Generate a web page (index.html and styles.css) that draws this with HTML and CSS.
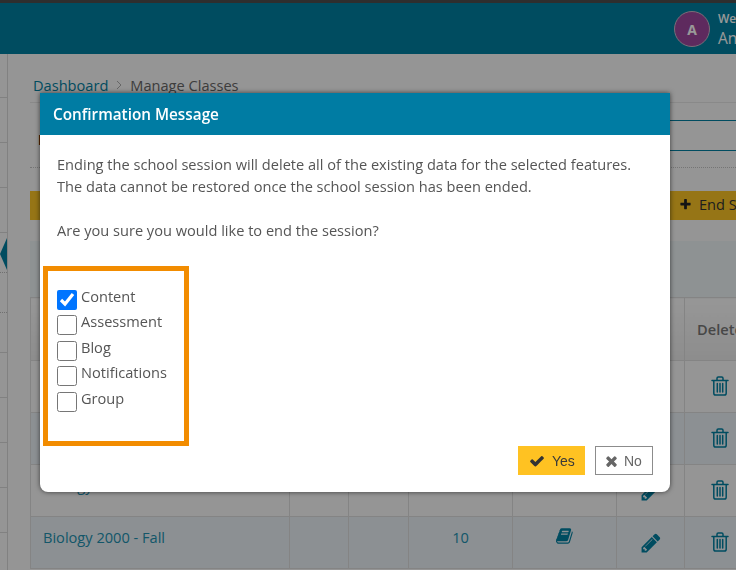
FILE: index.html
```html
<!DOCTYPE html>
<html lang="en">
<head>
<meta charset="utf-8">
<title>Manage Classes</title>
<link rel="stylesheet" href="styles.css">
</head>
<body>
<svg class="defs" aria-hidden="true">
  <symbol id="i-check" viewBox="0 0 1792 1792"><path d="M1671 566q0 40-28 68l-724 724-136 136q-28 28-68 28t-68-28l-136-136-362-362q-28-28-28-68t28-68l136-136q28-28 68-28t68 28l294 295 656-657q28-28 68-28t68 28l136 136q28 28 28 68z"/></symbol>
  <symbol id="i-times" viewBox="0 0 1408 1792"><path d="M1298 1322q0 40-28 68l-136 136q-28 28-68 28t-68-28l-294-294-294 294q-28 28-68 28t-68-28l-136-136q-28-28-28-68t28-68l294-294-294-294q-28-28-28-68t28-68l136-136q28-28 68-28t68 28l294 294 294-294q28-28 68-28t68 28l136 136q28 28 28 68t-28 68l-294 294 294 294q28 28 28 68z"/></symbol>
  <symbol id="i-plus" viewBox="0 0 1792 1792"><path d="M1600 736v192q0 40-28 68t-68 28h-416v416q0 40-28 68t-68 28h-192q-40 0-68-28t-28-68v-416h-416q-40 0-68-28t-28-68v-192q0-40 28-68t68-28h416v-416q0-40 28-68t68-28h192q40 0 68 28t28 68v416h416q40 0 68 28t28 68z"/></symbol>
  <symbol id="i-pencil" viewBox="0 0 1792 1792"><path d="M491 1536l91-91-235-235-91 91v107h128v128h107zm523-928q0-22-22-22-10 0-17 7l-542 542q-7 7-7 17 0 22 22 22 10 0 17-7l542-542q7-7 7-17zm-54-192l416 416-832 832h-416v-416zm683 96q0 53-37 90l-166 166-416-416 166-165q36-38 90-38 53 0 91 38l235 234q37 39 37 91z"/></symbol>
  <symbol id="i-book" viewBox="0 0 1792 1792"><path d="M1639 478q40 57 18 129l-275 906q-19 64-76.500 107.500t-122.500 43.500h-923q-77 0-148.500-53.500t-99.500-131.500q-24-67-2-127 0-4 3-27t4-37q1-8-3-21.500t-3-19.500q2-11 8-21t16.500-23.500 16.500-23.500q23-38 45-91.500t30-91.500q3-10 .5-30t-.5-28q3-11 17-28t17-23q21-36 42-92t25-90q1-9-2.500-32t.5-28q4-13 22-30.500t22-22.500q19-26 42.500-84.500t27.500-96.500q1-8-3-25.500t-2-26.500q2-8 9-18t18-23 17-21q8-12 16.500-30.500t15-35 16-36 19.500-32 26.500-23.500 36-11.500 47.500 5.500l-1 3q38-9 51-9h761q74 0 114 56t18 130l-274 906q-36 119-71.500 153.500t-128.500 34.500h-869q-27 0-38 15-11 16-1 43 24 70 144 70h923q29 0 56-15.500t35-41.500l300-987q7-22 5-57 38 15 59 43zm-1064 2q-4 13 2 22.500t20 9.500h608q13 0 25.500-9.500t16.500-22.500l21-64q4-13-2-22.500t-20-9.500h-608q-13 0-25.500 9.500t-16.500 22.500zm-83 256q-4 13 2 22.500t20 9.500h608q13 0 25.500-9.500t16.500-22.500l21-64q4-13-2-22.500t-20-9.500h-608q-13 0-25.500 9.500t-16.500 22.500z"/></symbol>
  <symbol id="i-trash" viewBox="0 0 18 20"><path class="trash-line" d="M1 4.500h16M6 4.500V2.300Q6 1 7.300 1h3.400Q12 1 12 2.300v2.200M2.800 4.500v12.700Q2.800 19 4.600 19h8.800q1.800 0 1.800-1.800V4.500M6.300 7.500v8.500M9 7.500v8.500M11.700 7.500v8.500"/></symbol>
</svg>

<header class="topbar">
  <div class="avatar">A</div>
  <div class="user">
    <div class="user-hello">Welcome</div>
    <div class="user-name">Andrew</div>
  </div>
</header>

<div class="page">
  <nav class="sidebar">
    <div class="nav-item nav-first"></div>
    <div class="nav-item"></div>
    <div class="nav-item"></div>
    <div class="nav-item"></div>
    <div class="nav-item nav-short"></div>
    <div class="nav-item nav-short"></div>
    <div class="nav-item nav-tall"></div>
    <div class="nav-item"></div>
    <div class="nav-item"></div>
    <div class="nav-item"></div>
    <div class="nav-item"></div>
    <span class="nav-toggle"></span>
  </nav>

  <main class="main">
    <div class="crumbs">
      <a class="crumb-link">Dashboard</a>
      <svg class="crumb-sep" viewBox="0 0 6 10"><path d="M1 1l4 4-4 4"/></svg>
      <span class="crumb-current">Manage Classes</span>
    </div>
    <div class="toolbar">
      <h1 class="page-title">Manage Classes</h1>
      <div class="search-field"></div>
    </div>
    <div class="dotted"></div>
    <div class="action-bar">
      <svg class="icon-plus"><use href="#i-plus"/></svg>
      <span>End Session</span>
    </div>
    <div class="band"></div>
    <table class="classes">
      <colgroup>
        <col class="c-name"><col class="c-a"><col class="c-b"><col class="c-c"><col class="c-d"><col class="c-e"><col class="c-f">
      </colgroup>
      <thead>
        <tr><th class="th-name">Class</th><th></th><th></th><th>Students</th><th>Content</th><th>Edit</th><th>Delete</th></tr>
      </thead>
      <tbody>
        <tr><td class="name">Algebra 1000 - Fall</td><td></td><td></td><td>12</td><td><svg class="icon-book"><use href="#i-book"/></svg></td><td><svg class="icon-pencil"><use href="#i-pencil"/></svg></td><td><svg class="icon-trash"><use href="#i-trash"/></svg></td></tr>
        <tr class="tint"><td class="name">Algebra 1000 - Spring</td><td></td><td></td><td>14</td><td><svg class="icon-book"><use href="#i-book"/></svg></td><td><svg class="icon-pencil"><use href="#i-pencil"/></svg></td><td><svg class="icon-trash"><use href="#i-trash"/></svg></td></tr>
        <tr><td class="name">Biology 1000 - Fall</td><td></td><td></td><td>11</td><td><svg class="icon-book"><use href="#i-book"/></svg></td><td><svg class="icon-pencil"><use href="#i-pencil"/></svg></td><td><svg class="icon-trash"><use href="#i-trash"/></svg></td></tr>
        <tr class="tint"><td class="name">Biology 2000 - Fall</td><td></td><td></td><td>10</td><td><svg class="icon-book"><use href="#i-book"/></svg></td><td><svg class="icon-pencil"><use href="#i-pencil"/></svg></td><td><svg class="icon-trash"><use href="#i-trash"/></svg></td></tr>
      </tbody>
    </table>
  </main>
</div>

<div class="overlay"></div>

<section class="modal" role="dialog" aria-labelledby="modal-title">
  <h2 class="modal-head" id="modal-title">Confirmation Message</h2>
  <div class="modal-body">
    <p class="msg">Ending the school session will delete all of the existing data for the selected features.<br>The data cannot be restored once the school session has been ended.</p>
    <p class="msg msg-ask">Are you sure you would like to end the session?</p>
    <div class="feature-box">
      <label class="feature"><input type="checkbox" checked><span>Content</span></label>
      <label class="feature"><input type="checkbox"><span>Assessment</span></label>
      <label class="feature"><input type="checkbox"><span>Blog</span></label>
      <label class="feature"><input type="checkbox"><span>Notifications</span></label>
      <label class="feature"><input type="checkbox"><span>Group</span></label>
    </div>
  </div>
  <div class="modal-foot">
    <button class="btn btn-yes" type="button"><svg class="btn-icon"><use href="#i-check"/></svg>Yes</button>
    <button class="btn btn-no" type="button"><svg class="btn-icon btn-icon-x"><use href="#i-times"/></svg>No</button>
  </div>
</section>
</body>
</html>
```

FILE: styles.css
```css
* { box-sizing: border-box; }

html, body {
  margin: 0;
  height: 570px;
  overflow: hidden;
}

body {
  background: #f8f8f8;
  font-family: "Open Sans", "Liberation Sans", sans-serif;
  font-size: 14.600px;
  color: #555;
}

.defs { display: none; }

/* top bar */
.topbar {
  display: flex;
  align-items: center;
  gap: 8px;
  height: 54px;
  padding-left: 674px;
  background: #017fa1;
  border-top: 3px solid #4e4e4e;
  overflow: hidden;
}

.avatar {
  flex: none;
  display: flex;
  align-items: center;
  justify-content: center;
  width: 36px;
  height: 36px;
  margin-top: 1px;
  border: 1px solid #c9b6c9;
  border-radius: 50%;
  background: #9d469d;
  color: #fff;
  font-weight: 700;
  font-size: 14px;
}

.user { color: #fff; white-space: nowrap; padding-top: 2px; }
.user-hello { font-size: 12px; font-weight: 600; line-height: 14px; }
.user-name { font-size: 15.500px; line-height: 20px; margin-top: 2px; }

/* page frame */
.page { display: flex; }

.sidebar {
  position: relative;
  flex: none;
  width: 8px;
  height: 516px;
  border-right: 1px solid #d8d8d8;
}

.nav-item { height: 45px; border-bottom: 1px solid #d8d8d8; }
.nav-first { height: 44px; }
.nav-short { height: 40px; border-bottom: 1px dotted #bbb; }
.nav-tall { height: 40px; }

.nav-toggle {
  position: absolute;
  left: 0;
  top: 184px;
  border-style: solid;
  border-width: 16px 7px 16px 0;
  border-color: transparent #017fa1 transparent transparent;
}

.main {
  flex: none;
  width: 800px;
  padding-left: 22px;
}

/* breadcrumb */
.crumbs {
  display: flex;
  align-items: center;
  gap: 8px;
  height: 49px;
  padding: 21px 0 7px 3px;
  margin-bottom: 17px;
  border-bottom: 1px solid #e4e4e4;
  font-size: 14.600px;
  line-height: 20px;
}
.crumb-link { color: #017fa1; }
.crumb-sep { width: 6px; height: 10px; fill: none; stroke: #aaa; stroke-width: 1; }
.crumb-current { color: #666; }

/* toolbar */
.toolbar {
  display: flex;
  align-items: flex-end;
  height: 31px;
}
.page-title {
  margin: 0;
  padding: 0 0 1px 8px;
  width: 400px;
  font-size: 14px;
  line-height: 20px;
  font-weight: 700;
  color: #000;
}
.search-field {
  flex: 1;
  height: 31px;
  border-top: 1px solid #017fa1;
  border-bottom: 1px solid #017fa1;
}

.dotted {
  margin-top: 16px;
  border-top: 1px dotted #c4c4c4;
}

/* yellow action bar */
.action-bar {
  display: flex;
  align-items: center;
  gap: 7px;
  height: 29px;
  margin-top: 23px;
  padding: 0 0 3px 649px;
  background: #fac325;
  color: #333;
  white-space: nowrap;
}
.icon-plus { width: 13px; height: 13px; fill: #222; flex: none; }

.band {
  height: 56px;
  margin-top: 21px;
  background: #edf3f5;
}

/* table */
.classes {
  table-layout: fixed;
  width: 725px;
  border-collapse: collapse;
}
.c-name { width: 259px; }
.c-a { width: 59px; }
.c-b { width: 60px; }
.c-c { width: 104px; }
.c-d { width: 104px; }
.c-e { width: 68px; }
.c-f { width: 71px; }

.classes th, .classes td {
  border: 1px solid #dcdcdc;
  text-align: center;
  padding: 0;
  white-space: nowrap;
}
.classes th {
  height: 63px;
  background: linear-gradient(#fbfbfb, #ebebeb);
  color: #777;
  font-weight: 600;
}
.classes th.th-name { text-align: left; padding-left: 12px; }
.classes td {
  height: 52px;
  padding-bottom: 12px;
  color: #2290b0;
}
.classes td.name { text-align: left; padding-left: 12px; }
.tint td { background: #e9f1f5; }

.icon-book { width: 18px; height: 18px; fill: #017fa1; vertical-align: middle; position: relative; top: -2px; }
.icon-pencil { width: 22px; height: 22px; fill: #017fa1; vertical-align: middle; position: relative; top: 6px; }
.icon-trash { width: 18px; height: 20px; vertical-align: middle; position: relative; top: 4px; }
.trash-line { fill: none; stroke: #017fa1; stroke-width: 1.500; stroke-linecap: round; stroke-linejoin: round; }

/* modal */
.overlay {
  position: fixed;
  inset: 0;
  background: rgba(0, 0, 0, 0.4);
}

.modal {
  position: absolute;
  left: 40px;
  top: 93px;
  display: flex;
  flex-direction: column;
  width: 630px;
  height: 399px;
  background: #fff;
  border-radius: 0 0 8px 8px;
  box-shadow: 0 0 5px rgba(0, 0, 0, 0.6);
}

.modal-head {
  flex: none;
  margin: 0;
  height: 42px;
  padding-left: 13px;
  background: #007ca3;
  color: #fff;
  font-size: 15.300px;
  font-weight: 600;
  line-height: 42px;
}

.modal-body { padding: 18px 17px 0; }

.msg {
  margin: 0;
  line-height: 22px;
  color: #555;
  white-space: nowrap;
}
.msg-ask { margin-top: 22px; }

.feature-box {
  display: flex;
  flex-direction: column;
  width: 146px;
  margin: 25px 0 0 -14px;
  padding: 19px 0 24px 9px;
  border: 5px solid #f28c00;
}

.feature {
  display: flex;
  gap: 4px;
  height: 25.400px;
  line-height: 12px;
  color: #555;
}
.feature input {
  flex: none;
  width: 20px;
  height: 20px;
  margin: 0;
}

.modal-foot {
  display: flex;
  justify-content: flex-end;
  gap: 10px;
  margin-top: auto;
  padding: 0 17px 17px 0;
}

.btn {
  display: flex;
  align-items: center;
  height: 29px;
  padding: 0;
  border: 0;
  font-family: "Liberation Sans", Arial, sans-serif;
  font-size: 14px;
}
.btn-icon { width: 16px; height: 16px; flex: none; }
.btn-yes {
  gap: 7px;
  width: 67px;
  padding-left: 11px;
  background: #ffc222;
  color: #3a3a3a;
}
.btn-yes .btn-icon { fill: #333; }
.btn-no {
  gap: 6px;
  width: 58px;
  padding-left: 9px;
  background: #fff;
  border: 1px solid #8c8c8c;
  color: #666;
}
.btn-no .btn-icon { fill: #666; width: 13px; }
```
